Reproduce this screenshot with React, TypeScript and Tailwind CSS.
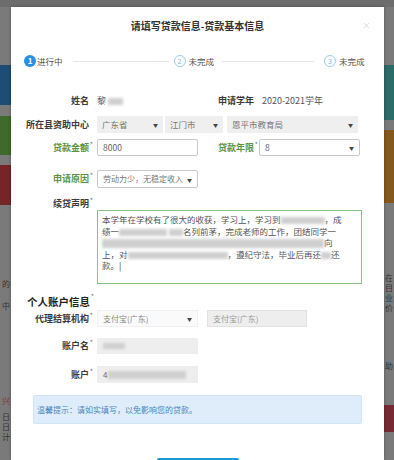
import React from "react";
import { X } from "lucide-react";

type LabelProps = { children: React.ReactNode; green?: boolean; star?: boolean; w?: string };

const Label = ({ children, green, star, w = "w-[78px] text-right" }: LabelProps) => (
  <div className={`${w} shrink-0 text-[9px] font-semibold leading-[12px] ${green ? "text-[#5d9442]" : "text-[#3b3b3b]"}`}>
    <span className="relative">
      {children}
      {star && <span className="absolute -right-[4px] -top-[3px] text-[7px] font-normal text-[#777]">*</span>}
    </span>
  </div>
);

const Blur = ({ w, h = "h-[7px]" }: { w: string; h?: string }) => (
  <span className={`inline-block align-middle ${w} ${h} bg-[#cfcfcf] blur-[1.5px]`} />
);

const Arrow = () => <span className="text-[5px] leading-none text-[#444]">▼</span>;

const LeftStrip = () => (
  <div className="w-[11px] shrink-0 flex flex-col text-[8px] leading-[10px] text-[#333] overflow-hidden">
    <div className="h-[58px] shrink-0" />
    <div className="h-[40px] shrink-0 bg-[#1d4c74]" />
    <div className="h-[11px] shrink-0" />
    <div className="h-[39px] shrink-0 bg-[#3e6a2b]" />
    <div className="h-[10px] shrink-0" />
    <div className="h-[40px] shrink-0 bg-[#772426]" />
    <div className="h-[74px] shrink-0" />
    <div className="pl-[2px]">的</div>
    <div className="h-[12px] shrink-0" />
    <div className="pl-[2px]">中</div>
    <div className="h-[85px] shrink-0" />
    <div className="pl-[2px] text-[#8a3030]">兴</div>
    <div className="h-[6px] shrink-0" />
    <div className="pl-[2px]">日</div>
    <div className="pl-[2px]">日</div>
    <div className="pl-[2px]">计</div>
  </div>
);

const RightStrip = () => (
  <div className="flex-1 flex flex-col text-[8px] leading-[10px] text-[#333] overflow-hidden">
    <div className="h-[58px] shrink-0" />
    <div className="h-[55px] shrink-0 bg-[#2b6b68]" />
    <div className="h-[10px] shrink-0" />
    <div className="h-[73px] shrink-0 bg-[#87581d]" />
    <div className="h-[70px] shrink-0" />
    <div className="pl-[1px]">在</div>
    <div className="pl-[1px]">目</div>
    <div className="pl-[1px]">业</div>
    <div className="pl-[1px]">价</div>
    <div className="h-[48px] shrink-0" />
    <div className="pl-[1px]">助</div>
    <div className="h-[34px] shrink-0" />
    <div className="h-[27px] shrink-0 bg-[#772a33]" />
  </div>
);

const Steps = () => (
  <div className="mt-[22px] h-[12px] flex items-center pl-[13px] text-[8.5px] text-[#555]">
    <div className="w-[12px] h-[12px] rounded-full bg-[#2a8fe0] text-white text-[8px] leading-[12px] text-center font-bold">1</div>
    <span className="ml-[1px]">进行中</span>
    <div className="ml-[10px] w-[96px] h-px bg-[#e6e6e6]" />
    <div className="ml-[5px] w-[12px] h-[12px] rounded-full border border-[#9ccdf0] text-[#7cb8e6] text-[7px] leading-[10px] text-center">2</div>
    <span className="ml-[3px]">未完成</span>
    <div className="ml-[8px] w-[92px] h-px bg-[#e6e6e6]" />
    <div className="ml-[10px] w-[12px] h-[12px] rounded-full border border-[#9ccdf0] text-[#7cb8e6] text-[7px] leading-[10px] text-center">3</div>
    <span className="ml-[3px]">未完成</span>
  </div>
);

const Dialog = () => (
  <div className="w-[373px] shrink-0 bg-white relative overflow-hidden shadow-[0_0_3px_rgba(0,0,0,0.3)]">
    {/* header */}
    <div className="pt-[12px] text-center text-[10px] font-bold leading-[14px] text-[#333]">请填写贷款信息-贷款基本信息</div>
    <X className="absolute right-[13px] top-[14px] text-[#c4c4c4]" size={9} strokeWidth={1.5} />

    <Steps />

    {/* basic info */}
    <div className="mt-[27px] h-[14px] flex items-center">
      <Label>姓名</Label>
      <div className="ml-[8px] w-[121px] flex items-center gap-[2px] text-[9px] text-[#555]">
        <span>黎</span>
        <Blur w="w-[15px]" />
      </div>
      <Label w="">申请学年</Label>
      <span className="ml-[8px] text-[9px] text-[#555]">2020-2021学年</span>
    </div>

    <div className="mt-[8px] h-[17px] flex items-center">
      <Label>所在县资助中心</Label>
      <div className="ml-[8px] w-[66px] h-full flex items-center justify-between bg-[#efefef] px-[5px] text-[8.5px] text-[#777]">
        <span>广东省</span>
        <Arrow />
      </div>
      <div className="ml-[2px] w-[58px] h-full flex items-center justify-between bg-[#efefef] px-[5px] text-[8.5px] text-[#777]">
        <span>江门市</span>
        <Arrow />
      </div>
      <div className="ml-[4px] w-[131px] h-full flex items-center justify-between bg-[#efefef] px-[5px] text-[8.5px] text-[#777]">
        <span>恩平市教育局</span>
        <Arrow />
      </div>
    </div>

    <div className="mt-[6px] h-[17px] flex items-center">
      <Label green star>贷款金额</Label>
      <div className="ml-[8px] w-[101px] h-full flex items-center border border-[#c9c9c9] rounded-[2px] px-[5px] text-[8.5px] text-[#666]">8000</div>
      <div className="ml-[20px]">
        <Label green star w="">贷款年限</Label>
      </div>
      <div className="ml-[5px] w-[101px] h-full flex items-center justify-between border border-[#c9c9c9] rounded-[2px] px-[5px] text-[8.5px] text-[#666]">
        <span>8</span>
        <Arrow />
      </div>
    </div>

    <div className="mt-[14px] h-[18px] flex items-center">
      <Label green star>申请原因</Label>
      <div className="ml-[8px] w-[101px] h-full flex items-center justify-between border border-[#c9c9c9] rounded-[2px] px-[5px] text-[8px] text-[#777]">
        <span>劳动力少，无稳定收入</span>
        <Arrow />
      </div>
    </div>

    <div className="mt-[10px] h-[12px] flex items-center">
      <Label star>续贷声明</Label>
    </div>
    <div className="ml-[86px] w-[265px] h-[74px] border border-[#8cc28a] px-[4px] pt-[3px] text-[8.5px] leading-[11.5px] text-[#555] whitespace-nowrap overflow-hidden">
      <div>本学年在学校有了很大的收获，学习上，学习到<Blur w="w-[44px]" />，成</div>
      <div>绩一<Blur w="w-[48px]" /> <Blur w="w-[14px]" />名列前茅，完成老师的工作，团结同学一</div>
      <div><Blur w="w-[222px]" h="h-[9px]" />向</div>
      <div>上，对<Blur w="w-[100px]" />，遵纪守法，毕业后再还<Blur w="w-[10px]" />还</div>
      <div>款。<span className="text-[#333]">|</span></div>
    </div>

    {/* account */}
    <div className="mt-[10px] h-[15px] flex items-center pl-[16px]">
      <span className="relative text-[10.5px] font-bold text-[#222]">
        个人账户信息
        <span className="absolute -right-[4px] -top-[3px] text-[7px] font-normal text-[#777]">*</span>
      </span>
    </div>

    <div className="mt-[1px] h-[17px] flex items-center">
      <Label star>代理结算机构</Label>
      <div className="ml-[8px] w-[101px] h-full flex items-center justify-between bg-[#fafafa] border border-[#f0f0f0] px-[5px] text-[8px] text-[#888]">
        <span>支付宝(广东)</span>
        <Arrow />
      </div>
      <div className="ml-[9px] w-[100px] h-full flex items-center bg-[#eeeeee] border border-[#e2e2e2] px-[5px] text-[8px] text-[#999]">支付宝(广东)</div>
    </div>

    <div className="mt-[11px] h-[16px] flex items-center">
      <Label star>账户名</Label>
      <div className="ml-[8px] w-[101px] h-full flex items-center bg-[#eeeeee] px-[6px]">
        <Blur w="w-[22px]" h="h-[6px]" />
      </div>
    </div>

    <div className="mt-[12px] h-[17px] flex items-center">
      <Label star>账户</Label>
      <div className="ml-[8px] w-[101px] h-full flex items-center gap-[1px] bg-[#eeeeee] px-[6px] text-[8px] text-[#666]">
        <span>4</span>
        <Blur w="w-[78px]" h="h-[8px]" />
      </div>
    </div>

    <div className="mt-[12px] ml-[22px] w-[329px] h-[29px] flex items-center bg-[#deedf9] border border-[#d2e5f4] rounded-[2px] pl-[3px] text-[8px] text-[#4a86bd]">
      温馨提示：请如实填写，以免影响您的贷款。
    </div>

    {/* next button, only its top edge is in view */}
    <div className="mt-[34px] ml-[146px] w-[82px] h-[30px] bg-[#1b9ad8] rounded-[2px]" />
  </div>
);

export default function App() {
  return (
    <div className="w-[394px] h-[460px] overflow-hidden bg-[#7a7a7a] flex flex-col font-['Noto_Sans_CJK_SC','Noto_Sans',sans-serif]">
      <div className="h-[7px] shrink-0 bg-[#6d6d6d]" />
      <div className="flex flex-1 min-h-0">
        <LeftStrip />
        <Dialog />
        <RightStrip />
      </div>
    </div>
  );
}
